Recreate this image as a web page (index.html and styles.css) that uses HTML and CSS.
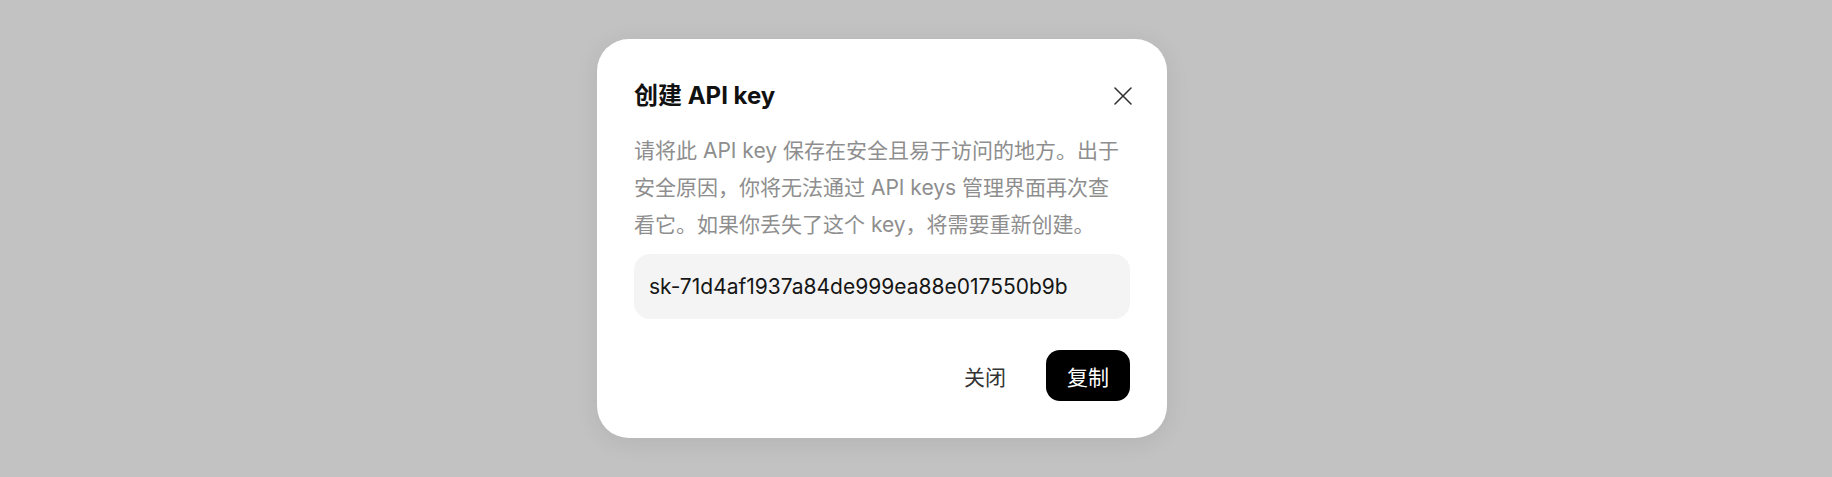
FILE: index.html
```html
<!DOCTYPE html>
<html lang="zh-CN">
<head>
<meta charset="utf-8">
<title>创建 API key</title>
<link rel="stylesheet" href="styles.css">
</head>
<body>
<div class="backdrop">
  <div class="modal">
    <div class="modal-header">
      <h2 class="modal-title">创建 API key</h2>
      <button class="close-btn" aria-label="关闭">
        <svg width="20" height="20" viewBox="0 0 20 20" fill="none" stroke="#333" stroke-width="1.6" stroke-linecap="round">
          <path d="M2 2 L18 18 M18 2 L2 18"/>
        </svg>
      </button>
    </div>
    <p class="modal-desc">请将此 API key 保存在安全且易于访问的地方。出于安全原因，你将无法通过 API keys 管理界面再次查看它。如果你丢失了这个 key，将需要重新创建。</p>
    <div class="key-box">sk-71d4af1937a84de999ea88e017550b9b</div>
    <div class="modal-actions">
      <button class="btn btn-ghost">关闭</button>
      <button class="btn btn-primary">复制</button>
    </div>
  </div>
</div>
</body>
</html>
```
FILE: styles.css
```css
* { box-sizing: border-box; }
html, body { margin: 0; padding: 0; height: 100%; }
body {
  background: #c2c2c2;
  font-family: Inter, "Noto Sans CJK SC", sans-serif;
}
.backdrop {
  height: 100%;
  display: flex;
  align-items: center;
  justify-content: center;
  padding-right: 68px;
}
.modal {
  width: 570px;
  background: #fff;
  border-radius: 32px;
  padding: 37px 37px 37px;
  box-shadow: 0 4px 24px rgba(0,0,0,0.08);
  display: flex;
  flex-direction: column;
}
.modal-header {
  display: flex;
  align-items: center;
  justify-content: space-between;
  height: 40px;
}
.modal-title {
  margin: 0;
  font-size: 24px;
  font-weight: 700;
  color: #111;
  line-height: 40px;
}
.close-btn {
  border: 0;
  background: none;
  padding: 0;
  width: 20px;
  height: 20px;
  margin-right: -3px;
  display: flex;
  cursor: pointer;
}
.modal-desc {
  margin: 16px 0 0;
  font-size: 21px;
  line-height: 37px;
  color: #8e8e8e;
}
.key-box {
  margin-top: 11px;
  height: 65px;
  background: #f4f4f4;
  border-radius: 16px;
  padding: 0 15px;
  display: flex;
  align-items: center;
  font-size: 21px;
  color: #161616;
}
.modal-actions {
  margin-top: 31px;
  display: flex;
  justify-content: flex-end;
  gap: 19px;
}
.btn {
  height: 51px;
  padding: 0 21px;
  border: 0;
  border-radius: 14px;
  font-family: inherit;
  font-size: 21px;
  font-weight: 400;
  cursor: pointer;
}
.btn-ghost {
  background: transparent;
  color: #333;
}
.btn-primary {
  background: #000;
  color: #fff;
}
```
